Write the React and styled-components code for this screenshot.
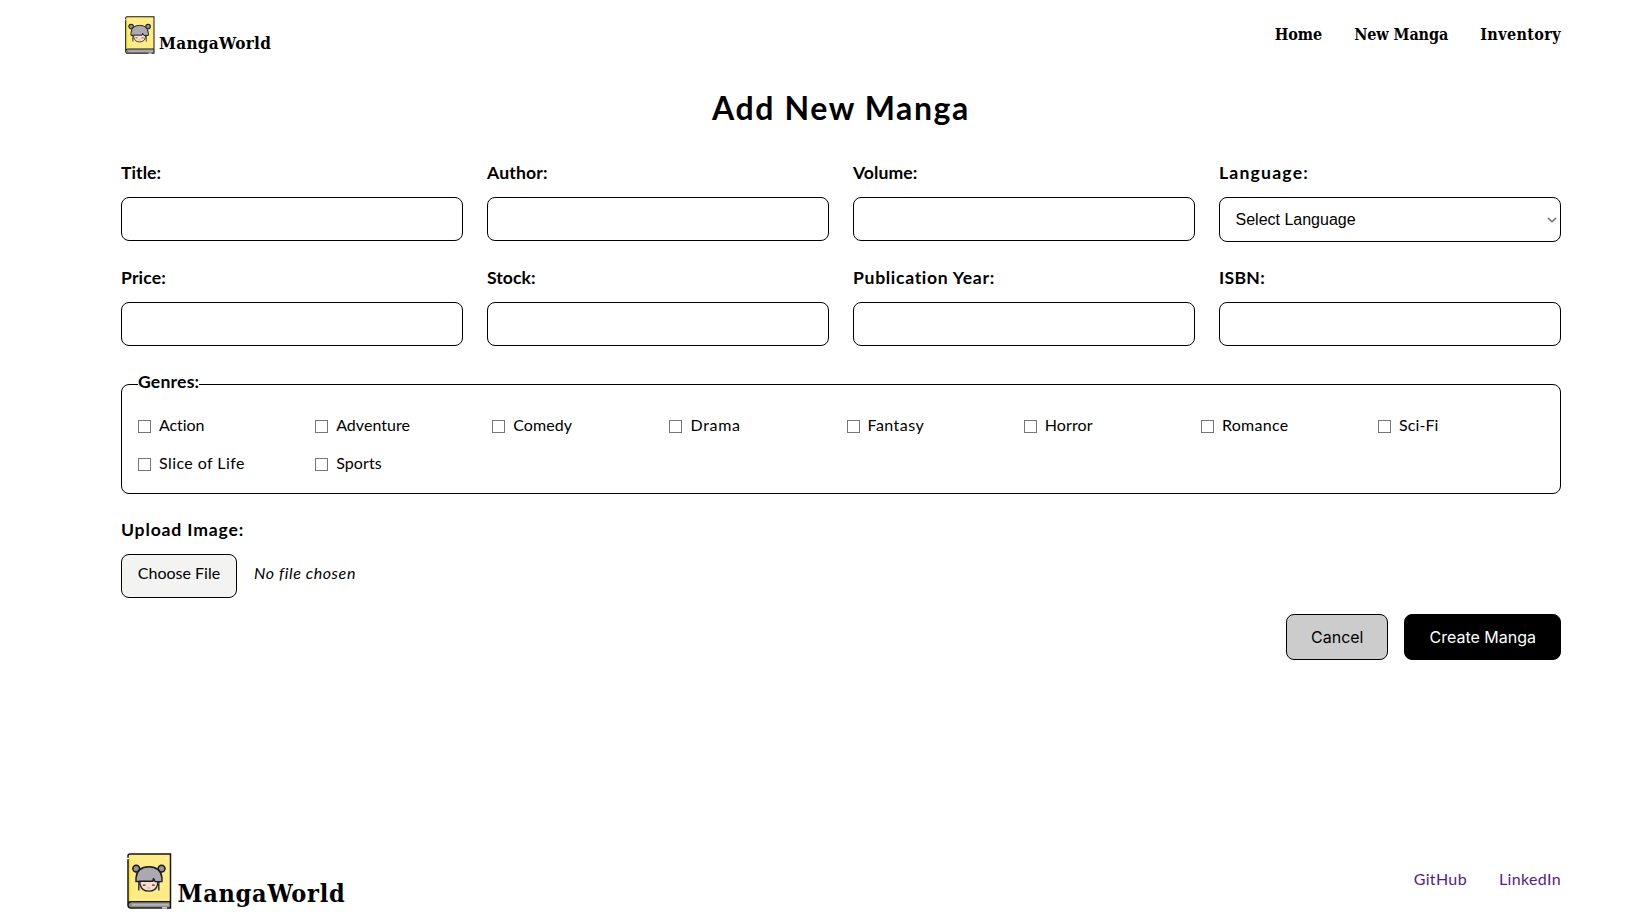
import React from 'react';
import styled, { createGlobalStyle } from 'styled-components';

const GlobalStyle = createGlobalStyle`
  *, *::before, *::after { box-sizing: border-box; }
  body {
    margin: 0;
    background: #fff;
    color: #000;
    font-family: Lato, sans-serif;
    font-size: 16px;
    line-height: 24px;
    font-variant-ligatures: none;
  }
`;

const Page = styled.div`
  display: flex;
  flex-direction: column;
  min-height: 100vh;
  padding: 0 76px 0 121px;
`;

const Header = styled.header`
  display: flex;
  justify-content: space-between;
  align-items: center;
  height: 68px;
`;

const Brand = styled.a`
  display: flex;
  align-items: flex-end;
  align-self: stretch;
  gap: ${(p) => (p.$large ? 5.5 : 4)}px;
  padding: ${(p) => (p.$large ? '0 0 13px 6px' : '0 0 13px 4px')};
  color: #000;
  text-decoration: none;
`;

const BrandName = styled.span`
  font-family: "DejaVu Serif Condensed", "DejaVu Serif", serif;
  font-stretch: condensed;
  font-weight: 700;
  font-size: ${(p) => (p.$large ? 25 : 17)}px;
  line-height: ${(p) => (p.$large ? 32 : 24)}px;
  letter-spacing: ${(p) => (p.$large ? 0.75 : 0.3)}px;
`;

const BookIcon = styled.svg`
  flex: none;
  width: ${(p) => (p.$large ? 45 : 30)}px;
  height: ${(p) => (p.$large ? 56 : 38)}px;
  margin-bottom: 1px;
`;

const Nav = styled.nav`
  display: flex;
  gap: 32px;
  padding-top: 2px;
`;

const NavLink = styled.a`
  color: #000;
  font-family: "DejaVu Serif Condensed", "DejaVu Serif", serif;
  font-stretch: condensed;
  font-weight: 700;
  text-decoration: none;
  letter-spacing: ${(p) => p.$track || 0}px;
`;

const Main = styled.main`
  flex: 1;
`;

const Heading = styled.h1`
  margin: 20px 0 32px;
  font-size: 32px;
  line-height: 40px;
  font-weight: 700;
  letter-spacing: 1.6px;
  text-align: center;
`;

const Form = styled.form`
  display: flex;
  flex-direction: column;
  gap: 23px;
`;

const Fields = styled.div`
  display: grid;
  grid-template-columns: repeat(4, 1fr);
  gap: 23px 24px;
`;

const Field = styled.div`
  display: flex;
  flex-direction: column;
  align-items: stretch;
  gap: 12px;
`;

const Label = styled.label`
  padding-top: 1px;
  font-size: 17.6px;
  font-weight: 700;
  letter-spacing: ${(p) => p.$track}px;
`;

const Input = styled.input`
  height: 44px;
  width: 100%;
  padding: 12px 16px;
  border: 1px solid #000;
  border-radius: 8px;
  background: #fff;
  font: 16px "Liberation Sans", Arial, sans-serif;
`;

const SelectBox = styled.div`
  display: grid;
  align-items: center;
  & > * { grid-area: 1 / 1; }
`;

const Select = styled.select`
  appearance: none;
  height: 45px;
  width: 100%;
  padding: 12px 15.5px;
  border: 1px solid #000;
  border-radius: 8px;
  background: #fff;
  color: #000;
  font: 16px "Liberation Sans", Arial, sans-serif;
`;

const Chevron = styled.svg`
  justify-self: end;
  width: 10px;
  height: 6px;
  margin-right: 4px;
  pointer-events: none;
`;

const Genres = styled.fieldset`
  min-width: 0;
  margin: 0;
  padding: 13px 16px 18px;
  border: 1px solid #000;
  border-radius: 8px;
`;

const Legend = styled.legend`
  padding: 1px 0 6px;
  font-size: 17.6px;
  font-weight: 700;
  letter-spacing: 0.2px;
`;

const GenreGrid = styled.div`
  display: grid;
  grid-template-columns: repeat(8, 1fr);
  gap: 14px 11.2px;
`;

const Genre = styled.label`
  display: flex;
  align-items: center;
  gap: 8px;
  letter-spacing: ${(p) => p.$track}px;
`;

const Checkbox = styled.input`
  appearance: none;
  flex: none;
  width: 13px;
  height: 13px;
  margin: 3px 0 0;
  border: 1px solid #767676;
  background: #fff;
  &:checked { background: #0075ff; }
`;

const FileRow = styled.div`
  display: flex;
  gap: 17px;
`;

const FileButton = styled.button`
  height: 44px;
  width: 116px;
  padding: 6px 0 12px;
  border: 1px solid #000;
  border-radius: 8px;
  background: #f3f3f2;
  color: #000;
  font: inherit;
`;

const FileName = styled.span`
  padding-top: 7px;
  font-style: italic;
  letter-spacing: 0.6px;
`;

const Actions = styled.div`
  display: flex;
  justify-content: flex-end;
  gap: 16px;
  margin-top: -7px;
`;

const Button = styled.button`
  height: 46px;
  padding: 0 24px;
  border: 1px solid #000;
  border-radius: 8px;
  background: ${(p) => (p.$primary ? '#000' : '#ccc')};
  color: ${(p) => (p.$primary ? '#fff' : '#000')};
  font: 16px Inter, sans-serif;
`;

const Footer = styled.footer`
  display: flex;
  justify-content: space-between;
  align-items: center;
  height: 90px;
`;

const FooterLink = styled.a`
  color: #551a8b;
  text-decoration: none;
  letter-spacing: 0.35px;
`;

const fields = [
  { id: 'title', label: 'Title:', track: 0.05 },
  { id: 'author', label: 'Author:', track: 0.15 },
  { id: 'volume', label: 'Volume:', track: 0.05 },
  { id: 'language', label: 'Language:', track: 1.2, select: true },
  { id: 'price', label: 'Price:', track: 0.15 },
  { id: 'stock', label: 'Stock:', track: 0.05 },
  { id: 'year', label: 'Publication Year:', track: 0.68 },
  { id: 'isbn', label: 'ISBN:', track: 0.3 },
];

const genres = [
  ['Action', -0.1], ['Adventure', 0.05], ['Comedy', 0.05], ['Drama', 0.7],
  ['Fantasy', 0.45], ['Horror', 0.1], ['Romance', 0.3], ['Sci-Fi', 0.1],
  ['Slice of Life', 0.42], ['Sports', 0.1],
];

function Logo({ large }) {
  return (
    <Brand href="#" $large={large}>
      <BookIcon $large={large} viewBox="0 0 45 56" preserveAspectRatio="none" aria-hidden="true">
        <path d="M2.5 1H43.5V55H3.5Q1 55 1 52V3Q1 1 2.5 1Z" fill="#ffec86" />
        <path d="M2.4 5V48" stroke="#ffe600" strokeWidth="1.8" />
        <path d="M1.5 49.5H43V54.5H3.5Q1.2 54 1.5 49.5Z" fill="#8d8d91" />
        <path d="M5 51.8H42" stroke="#b5b6ba" strokeWidth="2" />
        <path d="M43.5 48.8H4Q1 49 1 52Q1 55 4 55H43.5V1H3Q1 1 1 3V52" fill="none" stroke="#161616" strokeWidth="1.5" />
        <path d="M0 5.5H2M35 54.8H40" stroke="#fff" strokeWidth="1.3" />
        <path d="M38 5.5H41" stroke="#fff8cf" strokeWidth="1.4" />
        <path d="M11.8 28V37.5M31.8 28V37.5" stroke="#37343a" strokeWidth="1.5" />
        <path d="M13 26V31Q14.5 38.2 21.8 38.2Q29.2 38.2 30.7 31V26Z" fill="#f8dfd0" stroke="#262428" strokeWidth="1.3" />
        <circle cx="9.2" cy="15.6" r="3.4" fill="#939298" stroke="#19191b" strokeWidth="1.5" />
        <circle cx="34.6" cy="15.6" r="3.4" fill="#939298" stroke="#19191b" strokeWidth="1.5" />
        <path d="M9 28.6V25Q10 13.8 21.9 13.8Q33.8 13.8 35 25V28.6H28.2L26.5 25.5L25.8 28.2H13.5Z" fill="#aaa9af" stroke="#19191b" strokeWidth="1.4" strokeLinejoin="round" />
        <path d="M15.8 32.2H18.6M25 32.2H27.8" stroke="#4b3b39" strokeWidth="1.3" />
        <path d="M20.3 35H23.2" stroke="#cf8f83" strokeWidth="0.9" />
      </BookIcon>
      <BrandName $large={large}>MangaWorld</BrandName>
    </Brand>
  );
}

export default function App() {
  return (
    <>
      <GlobalStyle />
      <Page>
        <Header>
          <Logo />
          <Nav>
            <NavLink href="#">Home</NavLink>
            <NavLink href="#" $track={-0.1}>New Manga</NavLink>
            <NavLink href="#" $track={0.38}>Inventory</NavLink>
          </Nav>
        </Header>
        <Main>
          <Heading>Add New Manga</Heading>
          <Form onSubmit={(e) => e.preventDefault()}>
            <Fields>
              {fields.map((f) => (
                <Field key={f.id}>
                  <Label htmlFor={f.id} $track={f.track}>{f.label}</Label>
                  {f.select ? (
                    <SelectBox>
                      <Select id={f.id}><option>Select Language</option></Select>
                      <Chevron viewBox="0 0 10 6" aria-hidden="true">
                        <path d="M1 1L5 4.8L9 1" fill="none" stroke="#6b6b6b" strokeWidth="1.5" />
                      </Chevron>
                    </SelectBox>
                  ) : (
                    <Input id={f.id} />
                  )}
                </Field>
              ))}
            </Fields>
            <Genres>
              <Legend>Genres:</Legend>
              <GenreGrid>
                {genres.map(([name, track]) => (
                  <Genre key={name} $track={track}>
                    <Checkbox type="checkbox" />
                    {name}
                  </Genre>
                ))}
              </GenreGrid>
            </Genres>
            <Field>
              <Label as="span" $track={0.83}>Upload Image:</Label>
              <FileRow>
                <FileButton type="button">Choose File</FileButton>
                <FileName>No file chosen</FileName>
              </FileRow>
            </Field>
            <Actions>
              <Button type="button">Cancel</Button>
              <Button type="submit" $primary>Create Manga</Button>
            </Actions>
          </Form>
        </Main>
        <Footer>
          <Logo large />
          <Nav>
            <FooterLink href="#">GitHub</FooterLink>
            <FooterLink href="#">LinkedIn</FooterLink>
          </Nav>
        </Footer>
      </Page>
    </>
  );
}
